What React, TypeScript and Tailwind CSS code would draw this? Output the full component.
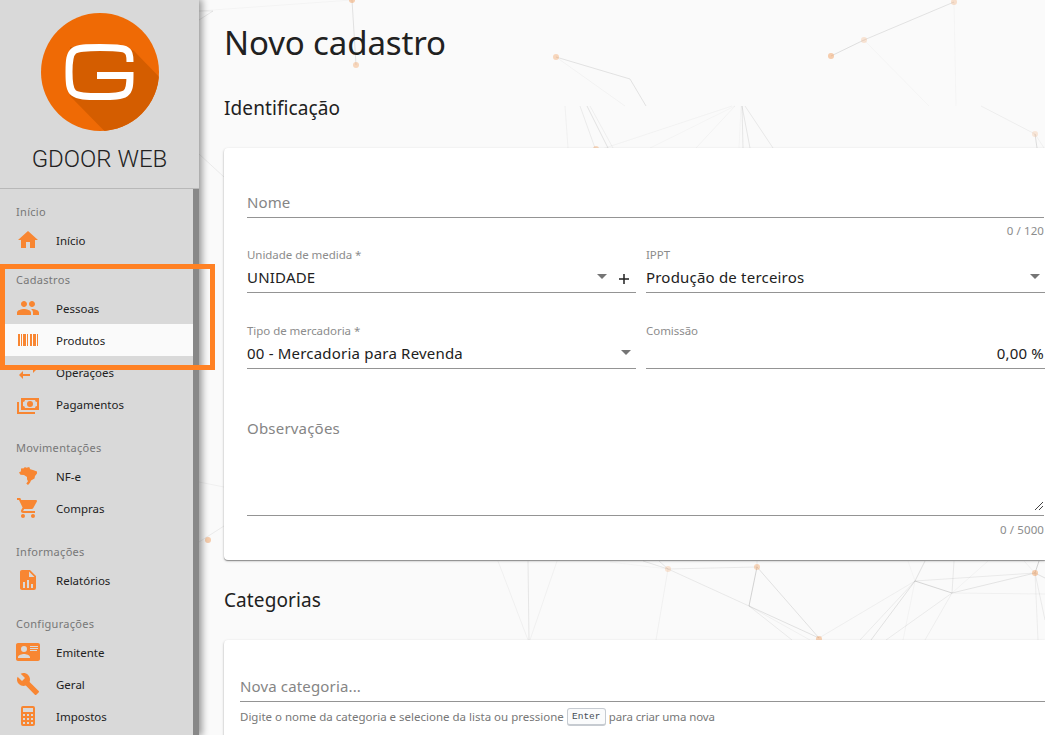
import React from "react";

const ICONS = {
  home: "M10,20V14H14V20H19V12H22L12,3L2,12H5V20H10Z",
  people:
    "M16 11c1.66 0 2.99-1.34 2.99-3S17.66 5 16 5s-3 1.34-3 3 1.34 3 3 3zm-8 0c1.66 0 2.99-1.34 2.99-3S9.66 5 8 5 5 6.34 5 8s1.34 3 3 3zm0 2c-2.33 0-7 1.17-7 3.5V19h14v-2.5c0-2.33-4.67-3.5-7-3.5zm8 0c-.29 0-.62.02-.97.05 1.16.84 1.97 1.97 1.97 3.45V19h6v-2.5c0-2.33-4.67-3.5-7-3.5z",
  barcode:
    "M2,6H4V18H2V6M5,6H6V18H5V6M7,6H10V18H7V6M11,6H12V18H11V6M14,6H16V18H14V6M17,6H20V18H17V6M21,6H22V18H21V6Z",
  swap: "M21,9L17,5V8H10V10H17V13M7,11L3,15L7,19V16H14V14H7V11Z",
  cash: "M5,6H23V18H5V6M14,9A3,3 0 0,1 17,12A3,3 0 0,1 14,15A3,3 0 0,1 11,12A3,3 0 0,1 14,9M9,8A2,2 0 0,1 7,10V14A2,2 0 0,1 9,16H19A2,2 0 0,1 21,14V10A2,2 0 0,1 19,8H9M1,10H3V20H19V22H1V10Z",
  brazil:
    "M5,4.5L8,4.2L8.7,3L10.5,3.8L13.2,3L14.2,5.2L17,6L21,7.4V9.5L19,12L18.5,14.5L15,16.5L14,18.7L12,21L10.3,19.5L12,17.3L11,15.2V13L8,11L4.5,10.7L3,8.5L5,7.2Z",
  cart: "M17,18A2,2 0 0,1 19,20A2,2 0 0,1 17,22C15.89,22 15,21.1 15,20C15,18.89 15.89,18 17,18M1,2H4.27L5.21,4H20A1,1 0 0,1 21,5C21,5.17 20.95,5.34 20.88,5.5L17.3,11.97C16.96,12.58 16.3,13 15.55,13H8.1L7.2,14.63L7.17,14.75A0.25,0.25 0 0,0 7.42,15H19V17H7C5.89,17 5,16.1 5,15C5,14.65 5.09,14.32 5.24,14.04L6.6,11.59L3,4H1V2M7,18A2,2 0 0,1 9,20A2,2 0 0,1 7,22C5.89,22 5,21.1 5,20C5,18.89 5.89,18 7,18Z",
  report:
    "M13,9H18.5L13,3.5V9M6,2H14L20,8V20A2,2 0 0,1 18,22H6C4.89,22 4,21.1 4,20V4C4,2.89 4.89,2 6,2M7,20H9V14H7V20M11,20H13V12H11V20M15,20H17V16H15V20Z",
  card: "M2,3H22C23.05,3 24,3.95 24,5V19C24,20.05 23.05,21 22,21H2C0.95,21 0,20.05 0,19V5C0,3.95 0.95,3 2,3M14,6V7H22V6H14M14,8V9H22V8H14M14,10V11H21V10H14M8,13.91C6,13.91 2,15 2,17V18H14V17C14,15 10,13.91 8,13.91M8,6A3,3 0 0,0 5,9A3,3 0 0,0 8,12A3,3 0 0,0 11,9A3,3 0 0,0 8,6Z",
  wrench:
    "M22.7,19L13.6,9.9C14.5,7.6 14,4.9 12.1,3C10.1,1 7.1,0.6 4.7,1.7L9,6L6,9L1.6,4.7C0.4,7.1 0.9,10.1 2.9,12.1C4.8,14 7.5,14.5 9.8,13.6L18.9,22.7C19.3,23.1 19.9,23.1 20.3,22.7L22.6,20.4C23.1,20 23.1,19.3 22.7,19Z",
  calc: "M7,2H17A2,2 0 0,1 19,4V20A2,2 0 0,1 17,22H7A2,2 0 0,1 5,20V4A2,2 0 0,1 7,2M7,4V8H17V4H7M7,10V12H9V10H7M11,10V12H13V10H11M15,10V12H17V10H15M7,14V16H9V14H7M11,14V16H13V14H11M15,14V16H17V14H15M7,18V20H9V18H7M11,18V20H13V18H11M15,18V20H17V18H15Z",
};

type Item = { label: string; icon: keyof typeof ICONS; active?: boolean };

const MENU: { title: string; items: Item[] }[] = [
  { title: "Início", items: [{ label: "Início", icon: "home" }] },
  {
    title: "Cadastros",
    items: [
      { label: "Pessoas", icon: "people" },
      { label: "Produtos", icon: "barcode", active: true },
      { label: "Operações", icon: "swap" },
      { label: "Pagamentos", icon: "cash" },
    ],
  },
  {
    title: "Movimentações",
    items: [
      { label: "NF-e", icon: "brazil" },
      { label: "Compras", icon: "cart" },
    ],
  },
  { title: "Informações", items: [{ label: "Relatórios", icon: "report" }] },
  {
    title: "Configurações",
    items: [
      { label: "Emitente", icon: "card" },
      { label: "Geral", icon: "wrench" },
      { label: "Impostos", icon: "calc" },
    ],
  },
];

function Logo() {
  return (
    <svg className="size-[118px]" viewBox="0 0 118 118">
      <defs>
        <clipPath id="disc">
          <circle cx="59" cy="59" r="59" />
        </clipPath>
      </defs>
      <circle cx="59" cy="59" r="59" fill="#ef6a05" />
      <path d="M29 34 86 34 93 38 125 71V140H85L29 83Z" fill="#d45d00" clipPath="url(#disc)" />
      <path
        d="M89 49C89 35 86 34.5 59 34.5C31 34.5 28 35 28 59C28 82 30 83.500 59 83.500C87 83.500 89 82 89 62.500H56"
        fill="none"
        stroke="#fff"
        strokeWidth="7"
      />
    </svg>
  );
}

function Sidebar() {
  return (
    <aside className="relative z-10 flex h-[735px] w-[199px] shrink-0 flex-col bg-[#d9d9d9] shadow-[2px_0_7px_1px_rgba(0,0,0,0.4)]">
      <div className="flex h-[189px] shrink-0 flex-col items-center border-b border-[#b8b8b8] pt-[13px]">
        <Logo />
        <div className="mt-[12px] font-[Roboto] text-[24px] leading-[32px] font-light text-[#222]">GDOOR WEB</div>
      </div>
      <div className="flex min-h-0 flex-1">
        <nav className="min-w-0 flex-1 overflow-hidden pt-[3px]">
          {MENU.map((group) => (
            <section key={group.title} className="mb-2 first:mb-1">
              <h3 className="flex h-[32px] items-center pt-[8px] pl-4 text-[11px] tracking-[0.3px] text-[#777]">
                {group.title}
              </h3>
              {group.items.map((item) => (
                <a
                  key={item.label}
                  className={
                    item.active
                      ? "flex h-8 items-center bg-[#fafafa] pl-4 text-[11.5px]"
                      : "flex h-8 items-center pl-4 text-[11.5px]"
                  }
                >
                  <svg className="mr-4 size-6 shrink-0" viewBox="0 0 24 24" fill="#f88632" fillRule="evenodd">
                    <path d={ICONS[item.icon]} />
                  </svg>
                  <span className="pt-[2px]">{item.label}</span>
                </a>
              ))}
            </section>
          ))}
        </nav>
        <div className="w-[6px] bg-[#888]" />
      </div>
    </aside>
  );
}

const LINES: [number, number, number, number, number][] = [
  [199, 11, 352, 0, 0.03], [352, 0, 356, 65, 0.12], [199, 20, 213, 11, 0.1], [199, 11, 213, 11, 0.08],
  [556, 57, 630, 79, 0.12], [630, 79, 646, 106, 0.12], [556, 57, 625, 106, 0.04],
  [565, 106, 568, 148, 0.05], [580, 106, 595, 148, 0.08], [587, 106, 608, 148, 0.12], [590, 106, 613, 148, 0.06],
  [732, 106, 599, 150, 0.04], [735, 106, 650, 148, 0.03], [735, 106, 696, 148, 0.04],
  [742, 106, 743, 148, 0.1], [742, 106, 750, 148, 0.1], [745, 106, 773, 148, 0.09], [741, 106, 739, 148, 0.03],
  [831, 56, 864, 40, 0.14], [864, 40, 954, 2, 0.12], [864, 40, 929, 106, 0.03], [954, 2, 956, 106, 0.03],
  [981, 106, 1035, 134, 0.06], [1035, 134, 1037, 148, 0.15], [1035, 134, 1044, 148, 0.05],
  [199, 154, 224, 177, 0.08], [199, 482, 224, 487, 0.05], [199, 542, 224, 526, 0.08],
  [498, 561, 528, 640, 0.05], [528, 561, 529, 640, 0.1], [557, 561, 530, 640, 0.05],
  [610, 562, 668, 569, 0.03], [643, 561, 668, 569, 0.1], [659, 561, 668, 569, 0.1], [668, 569, 757, 567, 0.09],
  [668, 569, 749, 606, 0.09], [668, 569, 656, 640, 0.05], [757, 567, 749, 606, 0.2], [757, 567, 819, 638, 0.12],
  [749, 606, 819, 638, 0.12], [749, 606, 792, 640, 0.08], [749, 606, 810, 640, 0.05], [757, 567, 757, 561, 0.08],
  [915, 581, 952, 593, 0.18], [915, 581, 925, 561, 0.13], [915, 581, 1035, 573, 0.08], [952, 593, 1035, 573, 0.11],
  [952, 593, 954, 561, 0.09], [915, 581, 819, 638, 0.06], [915, 581, 871, 640, 0.12], [915, 581, 860, 640, 0.08],
  [952, 593, 886, 640, 0.08], [952, 593, 925, 640, 0.06], [915, 581, 903, 640, 0.04], [952, 593, 1045, 594, 0.05],
  [952, 593, 988, 561, 0.04], [1035, 573, 1039, 561, 0.2], [1035, 573, 1045, 578, 0.13], [1035, 573, 1038, 640, 0.07],
  [1035, 573, 1045, 620, 0.08], [1024, 561, 1035, 573, 0.05], [908, 561, 915, 581, 0.03],
];

const DOTS: [number, number, number][] = [
  [352, 0, 0.5], [356, 65, 0.4], [556, 57, 0.4], [596, 149, 0.4], [831, 56, 0.5], [864, 40, 0.25], [954, 2, 0.3],
  [1035, 134, 0.22], [208, 540, 0.5], [668, 569, 0.25], [757, 567, 0.4], [819, 639, 0.45], [1035, 573, 0.5],
];

function Network() {
  return (
    <svg className="absolute inset-0 h-[735px] w-[1045px]" viewBox="0 0 1045 735">
      {LINES.map(([x1, y1, x2, y2, o], i) => (
        <line key={i} x1={x1} y1={y1} x2={x2} y2={y2} stroke="#333" strokeOpacity={o} />
      ))}
      {DOTS.map(([x, y, o], i) => (
        <circle key={i} cx={x} cy={y} r="3" fill="#f2a060" fillOpacity={o} />
      ))}
    </svg>
  );
}

function Caret() {
  return (
    <svg className="-mt-[2px] h-[5px] w-[10px] shrink-0" viewBox="0 0 10 5">
      <path d="M0 0H10L5 5Z" fill="#757575" />
    </svg>
  );
}

function Field({ label, children }: { label: string; children: React.ReactNode }) {
  return (
    <div className="flex h-[48px] flex-col border-b border-[#949494]">
      <div className="h-[19px] pt-px text-[11.5px] leading-[18px] tracking-[-0.05px] text-[#8c8c8c]">{label}</div>
      <div className="flex h-[27px] items-center text-[15px] tracking-[0.2px]">{children}</div>
    </div>
  );
}

const CARD = "bg-white rounded-l-[4px] shadow-[0_1px_1px_rgba(0,0,0,0.35),0_1px_3px_rgba(0,0,0,0.2)]";

export default function App() {
  return (
    <div className="relative flex h-[735px] w-[1045px] overflow-hidden bg-[#fafafa] font-['Noto_Sans',sans-serif] text-[#212121]">
      <Network />
      <Sidebar />
      <main className="relative flex w-[846px] shrink-0 flex-col pl-[25px]">
        <h1 className="mt-[20px] h-[46px] text-[33px] leading-[46px] tracking-[-0.12px]">Novo cadastro</h1>
        <h2 className="mt-[28px] h-[28px] text-[19px] leading-[28px] tracking-[0.1px]">Identificação</h2>
        <section className={`mt-[26px] h-[412px] shrink-0 pl-[23px] ${CARD}`}>
          <div className="mr-px flex h-[70px] items-end border-b border-[#949494] pb-[4px] text-[15px] leading-[22px] tracking-[0.1px] text-[#858585]">
            Nome
          </div>
          <div className="pt-[4px] pr-px text-right text-[11.5px] leading-[18px] tracking-[0.1px] text-[#8c8c8c]">0 / 120</div>
          <div className="mt-[5px] grid grid-cols-[389px_399px] gap-x-[10px] gap-y-[28px]">
            <Field label="Unidade de medida *">
              <span className="flex-1">UNIDADE</span>
              <Caret />
              <svg className="mt-[3px] mr-[7px] ml-[12px] size-[10px]" viewBox="0 0 10 10">
                <path d="M0 5H10M5 0V10" stroke="#212121" strokeWidth="1.500" />
              </svg>
            </Field>
            <Field label="IPPT">
              <span className="flex-1">Produção de terceiros</span>
              <span className="mr-[5px] flex">
                <Caret />
              </span>
            </Field>
            <Field label="Tipo de mercadoria *">
              <span className="flex-1">00 - Mercadoria para Revenda</span>
              <span className="mr-[5px] flex">
                <Caret />
              </span>
            </Field>
            <Field label="Comissão">
              <span className="flex-1 pr-px text-right">0,00 %</span>
            </Field>
          </div>
          <div className="mt-[48px] mr-px flex h-[99px] justify-between border-b border-[#949494] text-[15px] leading-[22px] tracking-[0.2px] text-[#858585]">
            Observações
            <svg className="mt-[84px] h-[10px] w-[10px]" viewBox="0 0 10 10">
              <path d="M1 9 9 1M5 9 9 5" stroke="#444" />
            </svg>
          </div>
          <div className="pt-[5px] pr-px text-right text-[11.5px] leading-[18px] tracking-[0.1px] text-[#8c8c8c]">0 / 5000</div>
        </section>
        <h2 className="mt-[26px] h-[28px] shrink-0 text-[19px] leading-[28px] tracking-[0.1px]">Categorias</h2>
        <section className={`mt-[26px] h-[120px] shrink-0 pl-[16px] ${CARD}`}>
          <div className="flex h-[62px] items-end border-b border-[#949494] pb-[4px] text-[15px] leading-[22px] tracking-[0.15px] text-[#858585]">
            Nova categoria...
          </div>
          <div className="flex h-[29px] items-center text-[11.5px] text-[#777]">
            Digite o nome da categoria e selecione da lista ou pressione
            <kbd className="mr-[3px] ml-[3px] flex h-[18px] w-[39px] items-center justify-center rounded-[3px] border border-b-2 border-[#c6cbd1] bg-[#fafbfc] pt-[2px] font-['Liberation_Mono',monospace] text-[9.500px] text-[#444d56]">
              Enter
            </kbd>
            <span className="tracking-[-0.12px]">para criar uma nova</span>
          </div>
        </section>
      </main>
      <div className="absolute top-[264px] left-0 z-20 h-[106px] w-[215px] border-5 border-[#ff8124]" />
    </div>
  );
}
